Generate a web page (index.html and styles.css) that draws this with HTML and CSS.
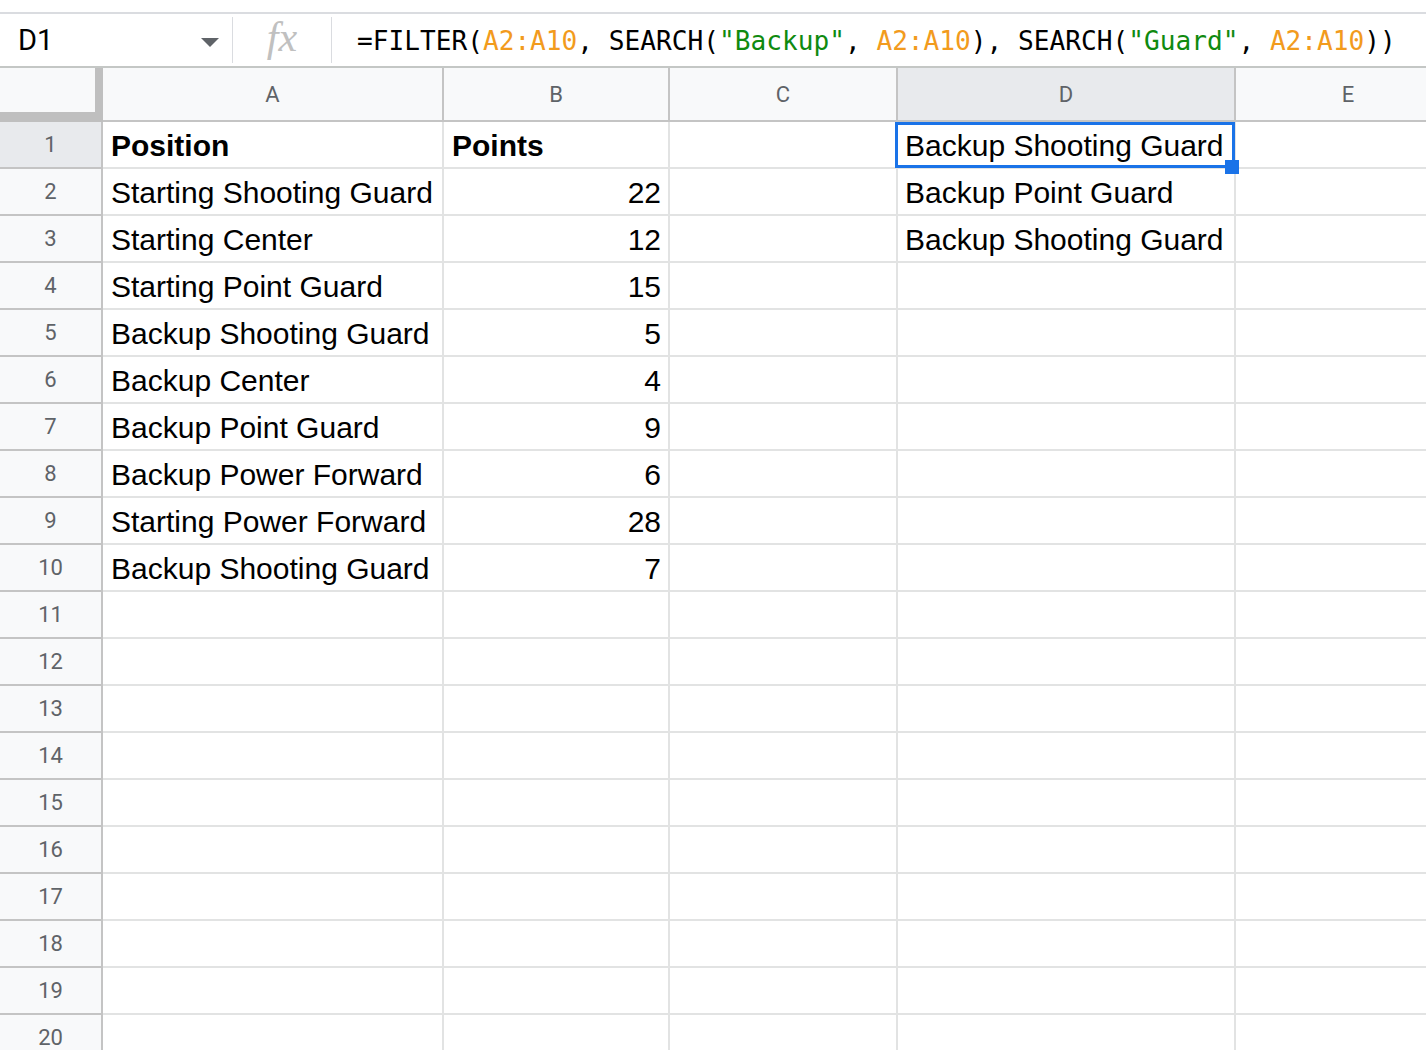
FILE: index.html
```html
<!DOCTYPE html>
<html>
<head>
<meta charset="utf-8">
<link rel="stylesheet" href="styles.css">
</head>
<body>
<div class="top-gap"></div>
<div class="fbar">
  <div class="namebox"><span>D1</span><svg class="caret" width="18" height="9" viewBox="0 0 18 9"><path d="M0 0 L18 0 L9 9 Z" fill="#5f6368"/></svg></div>
  <div class="sep"></div>
  <div class="fx">fx</div>
  <div class="sep"></div>
  <div class="formula">=FILTER(<span class="o">A2:A10</span>, SEARCH(<span class="g">"Backup"</span>, <span class="o">A2:A10</span>), SEARCH(<span class="g">"Guard"</span>, <span class="o">A2:A10</span>))</div>
</div>
<div class="sheet">
  <div class="corner"><div class="corner-in"></div></div>
  <div class="hd ch">A</div><div class="hd ch">B</div><div class="hd ch">C</div><div class="hd ch act">D</div><div class="hd ch">E</div>

  <div class="hd rh act">1</div><div class="cell b">Position</div><div class="cell b">Points</div><div class="cell"></div><div class="cell dcol sel-cell">Backup Shooting Guard<div class="sel"></div><div class="handle"></div></div><div class="cell"></div>
  <div class="hd rh">2</div><div class="cell">Starting Shooting Guard</div><div class="cell num">22</div><div class="cell"></div><div class="cell dcol">Backup Point Guard</div><div class="cell"></div>
  <div class="hd rh">3</div><div class="cell">Starting Center</div><div class="cell num">12</div><div class="cell"></div><div class="cell dcol">Backup Shooting Guard</div><div class="cell"></div>
  <div class="hd rh">4</div><div class="cell">Starting Point Guard</div><div class="cell num">15</div><div class="cell"></div><div class="cell"></div><div class="cell"></div>
  <div class="hd rh">5</div><div class="cell">Backup Shooting Guard</div><div class="cell num">5</div><div class="cell"></div><div class="cell"></div><div class="cell"></div>
  <div class="hd rh">6</div><div class="cell">Backup Center</div><div class="cell num">4</div><div class="cell"></div><div class="cell"></div><div class="cell"></div>
  <div class="hd rh">7</div><div class="cell">Backup Point Guard</div><div class="cell num">9</div><div class="cell"></div><div class="cell"></div><div class="cell"></div>
  <div class="hd rh">8</div><div class="cell">Backup Power Forward</div><div class="cell num">6</div><div class="cell"></div><div class="cell"></div><div class="cell"></div>
  <div class="hd rh">9</div><div class="cell">Starting Power Forward</div><div class="cell num">28</div><div class="cell"></div><div class="cell"></div><div class="cell"></div>
  <div class="hd rh">10</div><div class="cell">Backup Shooting Guard</div><div class="cell num">7</div><div class="cell"></div><div class="cell"></div><div class="cell"></div>
  <div class="hd rh">11</div><div class="cell"></div><div class="cell"></div><div class="cell"></div><div class="cell"></div><div class="cell"></div>
  <div class="hd rh">12</div><div class="cell"></div><div class="cell"></div><div class="cell"></div><div class="cell"></div><div class="cell"></div>
  <div class="hd rh">13</div><div class="cell"></div><div class="cell"></div><div class="cell"></div><div class="cell"></div><div class="cell"></div>
  <div class="hd rh">14</div><div class="cell"></div><div class="cell"></div><div class="cell"></div><div class="cell"></div><div class="cell"></div>
  <div class="hd rh">15</div><div class="cell"></div><div class="cell"></div><div class="cell"></div><div class="cell"></div><div class="cell"></div>
  <div class="hd rh">16</div><div class="cell"></div><div class="cell"></div><div class="cell"></div><div class="cell"></div><div class="cell"></div>
  <div class="hd rh">17</div><div class="cell"></div><div class="cell"></div><div class="cell"></div><div class="cell"></div><div class="cell"></div>
  <div class="hd rh">18</div><div class="cell"></div><div class="cell"></div><div class="cell"></div><div class="cell"></div><div class="cell"></div>
  <div class="hd rh">19</div><div class="cell"></div><div class="cell"></div><div class="cell"></div><div class="cell"></div><div class="cell"></div>
  <div class="hd rh">20</div><div class="cell"></div><div class="cell"></div><div class="cell"></div><div class="cell"></div><div class="cell"></div>
</div>
</body>
</html>
```

FILE: styles.css
```css
html, body {
  margin: 0;
  padding: 0;
  background: #ffffff;
  overflow: hidden;
  height: 1050px;
}
body {
  font-family: "Liberation Sans", Arial, sans-serif;
  color: #000;
}
.top-gap {
  height: 12px;
}
.fbar {
  display: flex;
  align-items: center;
  height: 52px;
  border-top: 2px solid #dadce0;
  border-bottom: 2px solid #c4c7c5;
}
.namebox {
  width: 232px;
  box-sizing: border-box;
  padding: 0 13px 0 18px;
  display: flex;
  align-items: center;
  justify-content: space-between;
  font-family: Roboto, sans-serif;
  font-size: 29px;
  color: #000;
}
.caret {
  display: block;
  margin-top: 4px;
}
.sep {
  width: 1px;
  height: 46px;
  background: #dadce0;
}
.fx {
  width: 98px;
  text-align: center;
  font-family: "Liberation Serif", serif;
  font-style: italic;
  font-size: 42px;
  color: #c0c0c0;
  line-height: 1;
  margin-top: -6px;
}
.formula {
  padding-left: 25px;
  padding-top: 2px;
  font-family: "DejaVu Sans Mono", monospace;
  font-size: 26.15px;
  color: #000;
  white-space: nowrap;
}
.o { color: #f29b1d; }
.g { color: #0f8a0f; }

.sheet {
  display: grid;
  width: 1462px;
  grid-template-columns: 103px 341px 226px 228px 338px 226px;
  grid-template-rows: 54px;
  grid-auto-rows: 47px;
}
.corner {
  background: #bfbfbf;
}
.corner-in {
  width: 95px;
  height: 44px;
  background: #f8f9fa;
}
.hd {
  box-sizing: border-box;
  background: #f8f9fa;
  border-right: 2px solid #c4c4c4;
  border-bottom: 2px solid #c4c4c4;
  display: flex;
  align-items: center;
  justify-content: center;
  font-family: Roboto, sans-serif;
  font-size: 22px;
  color: #5f6368;
}
.hd.act {
  background: #e8eaed;
}
.cell {
  box-sizing: border-box;
  border-right: 2px solid #e2e3e3;
  border-bottom: 2px solid #e2e3e3;
  display: flex;
  align-items: center;
  padding: 2px 7px 0 8px;
  font-size: 30px;
  white-space: nowrap;
}
.dcol {
  padding-left: 7px;
}
.num {
  justify-content: flex-end;
}
.b {
  font-weight: bold;
}
.sel-cell {
  position: relative;
}
.sel {
  position: absolute;
  left: -3px;
  top: 0;
  right: -1px;
  bottom: -1px;
  border: 3px solid #1a73e8;
}
.handle {
  position: absolute;
  right: -5px;
  bottom: -7px;
  width: 14px;
  height: 14px;
  background: #1a73e8;
}
```
